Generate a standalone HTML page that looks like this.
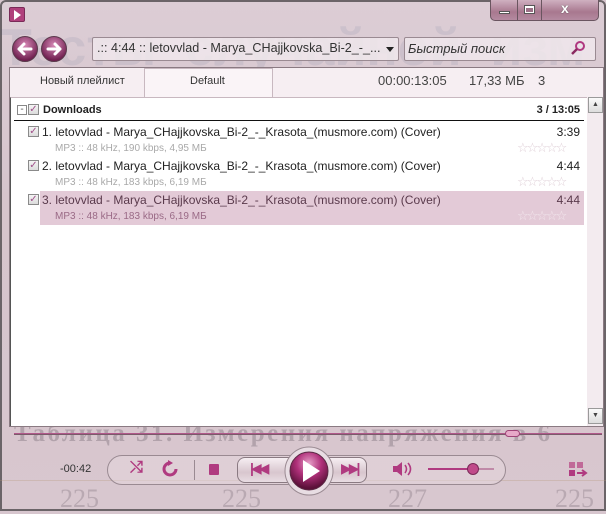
<!DOCTYPE html>
<html><head><meta charset="utf-8"><style>
*{margin:0;padding:0;box-sizing:border-box}
body{width:606px;height:511px;overflow:hidden;position:relative;font-family:"Liberation Sans","DejaVu Sans",sans-serif;background:#d7c6ce}
.a{position:absolute}
.win{left:0;top:0;width:606px;height:511px;border:2px solid #6b6468;border-radius:6px 6px 0 0;background:linear-gradient(180deg,#dccdd5 0%,#d6c4cc 40%,#d8c7cf 100%)}
.bg{font-family:"Liberation Serif",serif;color:rgba(90,80,90,.25);white-space:nowrap}
.t{white-space:nowrap}
.cb{width:11px;height:11px;border:1px solid #8a8a8a;background:linear-gradient(#f4f4f4,#dcdcdc);color:#a0508a;font-size:10px;line-height:9px;text-align:center}
.sub{font-size:10px;color:#a9a9a9}
.stars{color:#e0d0d8;font-size:13px;letter-spacing:-2px;line-height:12px}
</style></head><body>
<div class="a win"></div>
<div class="a bg" style="left:0;top:18px;font-size:52px;font-family:'Liberation Sans',sans-serif;font-weight:bold;color:rgba(80,100,140,.1)">Тесты&nbsp;&nbsp;случайной&nbsp;&nbsp;изм</div>
<div class="a bg" style="left:14px;top:420px;font-size:25px;font-weight:bold;letter-spacing:2.5px;color:rgba(90,80,90,.3)">Таблица 31. Измерения напряжения в 6</div>
<div class="a bg" style="left:60px;top:484px;font-size:26px">225</div>
<div class="a bg" style="left:222px;top:484px;font-size:26px">225</div>
<div class="a bg" style="left:388px;top:484px;font-size:26px">227</div>
<div class="a bg" style="left:555px;top:484px;font-size:26px">225</div>
<div class="a" style="left:0;top:480px;width:606px;height:1px;background:rgba(180,150,120,.3)"></div>

<div class="a" style="left:9px;top:7px;width:16px;height:15px;background:#b0407c;border:1px solid #7a2a58;border-radius:2px"></div>
<div class="a" style="left:14px;top:10px;width:0;height:0;border-left:7px solid #fff;border-top:5px solid transparent;border-bottom:5px solid transparent"></div>
<div class="a" style="left:490px;top:0;width:109px;height:21px;border:1px solid #6a5560;border-top:none;border-radius:0 0 5px 5px;background:linear-gradient(#cfb0c0,#a8788f 60%,#b48aa0);overflow:hidden">
 <div class="a" style="left:26px;top:0;width:1px;height:21px;background:#6a5560"></div>
 <div class="a" style="left:50px;top:0;width:1px;height:21px;background:#6a5560"></div>
 <div class="a" style="left:8px;top:11px;width:11px;height:3px;background:#fff;border:1px solid #555"></div>
 <div class="a" style="left:33px;top:5px;width:11px;height:9px;background:#fff;border:1px solid #555"></div>
 <div class="a" style="left:35px;top:8px;width:7px;height:4px;background:#9c6f86"></div>
 <div class="a t" style="left:70px;top:0px;font-size:14px;font-weight:bold;color:#fff;text-shadow:0 0 1px #333">x</div>
</div>
<svg class="a" style="left:11px;top:35px" width="60" height="28">
 <defs><radialGradient id="g1" cx="50%" cy="35%" r="60%"><stop offset="0" stop-color="#d88ab8"/><stop offset="1" stop-color="#6e1e4e"/></radialGradient></defs>
 <circle cx="14" cy="14" r="12.5" fill="url(#g1)" stroke="#5a3a4c"/>
 <circle cx="43" cy="14" r="12.5" fill="url(#g1)" stroke="#5a3a4c"/>
 <path d="M8 14h12M8 14l5-5M8 14l5 5" stroke="#fff" stroke-width="3" fill="none" stroke-linecap="round"/>
 <path d="M49 14h-12M49 14l-5-5M49 14l-5 5" stroke="#fff" stroke-width="3" fill="none" stroke-linecap="round"/>
</svg>
<div class="a" style="left:92px;top:37px;width:307px;height:24px;border:1px solid #9a8a92;background:rgba(240,232,236,.85);border-radius:2px"></div>
<div class="a t" style="left:97px;top:41px;font-size:12.6px;color:#333">.:: 4:44 :: letovvlad - Marya_CHajjkovska_Bi-2_-_...</div>
<div class="a" style="left:386px;top:47px;border-top:5px solid #222;border-left:4px solid transparent;border-right:4px solid transparent"></div>
<div class="a" style="left:404px;top:37px;width:192px;height:24px;border:1px solid #9a8a92;background:rgba(240,232,236,.85);border-radius:2px"></div>
<div class="a t" style="left:408px;top:41px;font-size:13px;color:#333;font-style:italic">Быстрый поиск</div>
<svg class="a" style="left:570px;top:40px" width="16" height="16"><circle cx="10" cy="6" r="4" fill="none" stroke="#b03880" stroke-width="2"/><path d="M7 9L2 14" stroke="#8a2a60" stroke-width="2.5"/></svg>

<div class="a" style="left:9px;top:67px;width:595px;height:360px;background:#f6eef2;border:1px solid #8a7a82"></div>
<div class="a t" style="left:40px;top:75px;font-size:11px;color:#333">Новый плейлист</div>
<div class="a" style="left:144px;top:68px;width:129px;height:30px;background:#faf4f7;border:1px solid #c8b8c0;border-bottom:none"></div>
<div class="a t" style="left:190px;top:75px;font-size:11px;color:#333">Default</div>
<div class="a t" style="left:378px;top:73px;font-size:13px;color:#444">00:00:13:05</div>
<div class="a t" style="left:469px;top:73px;font-size:13px;color:#444">17,33 МБ</div>
<div class="a t" style="left:538px;top:73px;font-size:13px;color:#444">3</div>
<div class="a" style="left:10px;top:97px;width:577px;height:329px;background:#fff;border-left:1px solid #555;border-top:1px solid #c8b8c0"></div>
<div class="a" style="left:587px;top:97px;width:16px;height:329px;background:#f3ebef"></div>
<div class="a" style="left:588px;top:97px;width:15px;height:16px;border:1px solid #9a9a9a;background:linear-gradient(#fafafa,#ddd);font-size:7px;text-align:center;line-height:13px;color:#444">▲</div>
<div class="a" style="left:588px;top:408px;width:15px;height:16px;border:1px solid #9a9a9a;background:linear-gradient(#fafafa,#ddd);font-size:7px;text-align:center;line-height:13px;color:#444">▼</div>

<div class="a" style="left:17px;top:105px;width:10px;height:10px;border:1px solid #888;background:#fff;font-size:10px;line-height:7px;text-align:center;color:#555">-</div>
<div class="a cb" style="left:28px;top:104px">✓</div>
<div class="a t" style="left:43px;top:104px;font-size:11px;font-weight:bold;color:#222">Downloads</div>
<div class="a t" style="left:530px;top:104px;width:50px;text-align:right;font-size:11px;font-weight:bold;color:#222">3 / 13:05</div>
<div class="a" style="left:14px;top:120px;width:570px;height:1px;background:#111"></div>

<div class="a" style="left:40px;top:191px;width:544px;height:34px;background:#e3cad7"></div>

<div class="a cb" style="left:28px;top:126px">✓</div>
<div class="a t" style="left:42px;top:125px;font-size:12px;color:#222">1. letovvlad - Marya_CHajjkovska_Bi-2_-_Krasota_(musmore.com) (Cover)</div>
<div class="a t" style="left:530px;top:125px;width:50px;text-align:right;font-size:12px;color:#222">3:39</div>
<div class="a t sub" style="left:55px;top:143px">MP3 :: 48 kHz, 190 kbps, 4,95 МБ</div>
<div class="a t stars" style="left:517px;top:142px">☆☆☆☆☆</div>

<div class="a cb" style="left:28px;top:160px">✓</div>
<div class="a t" style="left:42px;top:159px;font-size:12px;color:#222">2. letovvlad - Marya_CHajjkovska_Bi-2_-_Krasota_(musmore.com) (Cover)</div>
<div class="a t" style="left:530px;top:159px;width:50px;text-align:right;font-size:12px;color:#222">4:44</div>
<div class="a t sub" style="left:55px;top:177px">MP3 :: 48 kHz, 183 kbps, 6,19 МБ</div>
<div class="a t stars" style="left:517px;top:176px">☆☆☆☆☆</div>

<div class="a cb" style="left:28px;top:194px">✓</div>
<div class="a t" style="left:42px;top:193px;font-size:12px;color:#5a3a4c">3. letovvlad - Marya_CHajjkovska_Bi-2_-_Krasota_(musmore.com) (Cover)</div>
<div class="a t" style="left:530px;top:193px;width:50px;text-align:right;font-size:12px;color:#5a3a4c">4:44</div>
<div class="a t sub" style="left:55px;top:211px;color:#9a6a86">MP3 :: 48 kHz, 183 kbps, 6,19 МБ</div>
<div class="a t stars" style="left:517px;top:210px;color:#f2e6ec">☆☆☆☆☆</div>

<div class="a" style="left:14px;top:433px;width:588px;height:2px;background:#b0588a;border-bottom:1px solid #7a5a6a"></div>
<div class="a" style="left:505px;top:430px;width:15px;height:7px;border-radius:4px;background:#e7a9c8;border:1px solid #a04478"></div>

<div class="a t" style="left:60px;top:463px;font-size:11px;color:#333">-00:42</div>
<div class="a" style="left:107px;top:455px;width:399px;height:30px;border:1px solid #9a8a92;border-radius:15px;background:rgba(230,215,222,.5)"></div>
<div class="a t" style="left:130px;top:459px;font-size:16px;color:#b03a80;font-weight:bold">⤭</div>
<svg class="a" style="left:161px;top:460px" width="18" height="18"><path d="M9 3A6 6 0 1 0 15 9" stroke="#b03a80" stroke-width="3" fill="none"/><path d="M7 0l5 3-5 3z" fill="#b03a80"/></svg>
<div class="a" style="left:194px;top:460px;width:1px;height:20px;background:#9a8a92"></div>
<div class="a" style="left:209px;top:464px;width:10px;height:11px;background:#b03a80;border-radius:1px"></div>
<div class="a" style="left:237px;top:457px;width:130px;height:26px;border:1px solid #8a7a82;border-radius:8px;background:linear-gradient(#f6eef2,#d8c6ce 60%,#e8dce2)"></div>
<div class="a t" style="left:250px;top:460px;font-size:14px;color:#b03a80;letter-spacing:-3px;font-weight:bold">|◀◀</div>
<div class="a t" style="left:341px;top:460px;font-size:14px;color:#b03a80;letter-spacing:-3px;font-weight:bold">▶▶|</div>
<svg class="a" style="left:284px;top:446px" width="50" height="50"><defs><radialGradient id="g2" cx="50%" cy="30%" r="65%"><stop offset="0" stop-color="#e6a0c8"/><stop offset=".5" stop-color="#b0307a"/><stop offset="1" stop-color="#5a1038"/></radialGradient></defs><circle cx="25" cy="25" r="24" fill="#e8dde3" stroke="#9a8a92"/><circle cx="25" cy="25" r="19" fill="url(#g2)" stroke="#5a2a44"/><path d="M19 14L36 25L19 36Z" fill="#fff"/></svg>
<svg class="a" style="left:392px;top:461px" width="22" height="16"><path d="M1 5h4l5-4v14l-5-4H1z" fill="#b03a80"/><path d="M13 4q3 4 0 8M16 2q5 6 0 12" stroke="#b03a80" stroke-width="1.6" fill="none"/></svg>
<div class="a" style="left:428px;top:468px;width:66px;height:2px;background:#c08aa8"></div>
<div class="a" style="left:428px;top:468px;width:46px;height:2px;background:#b03a80"></div>
<div class="a" style="left:467px;top:463px;width:12px;height:12px;border-radius:6px;background:#c04a8a;border:1px solid #7a2a58"></div>
<svg class="a" style="left:569px;top:462px" width="20" height="18"><rect x="0" y="0" width="6" height="6" fill="#c06a98"/><rect x="8" y="0" width="6" height="6" fill="#c06a98"/><rect x="0" y="8" width="6" height="6" fill="#b03a80"/><path d="M8 11h8M13 8l4 3-4 3" stroke="#b03a80" stroke-width="2" fill="none"/></svg>
</body></html>
